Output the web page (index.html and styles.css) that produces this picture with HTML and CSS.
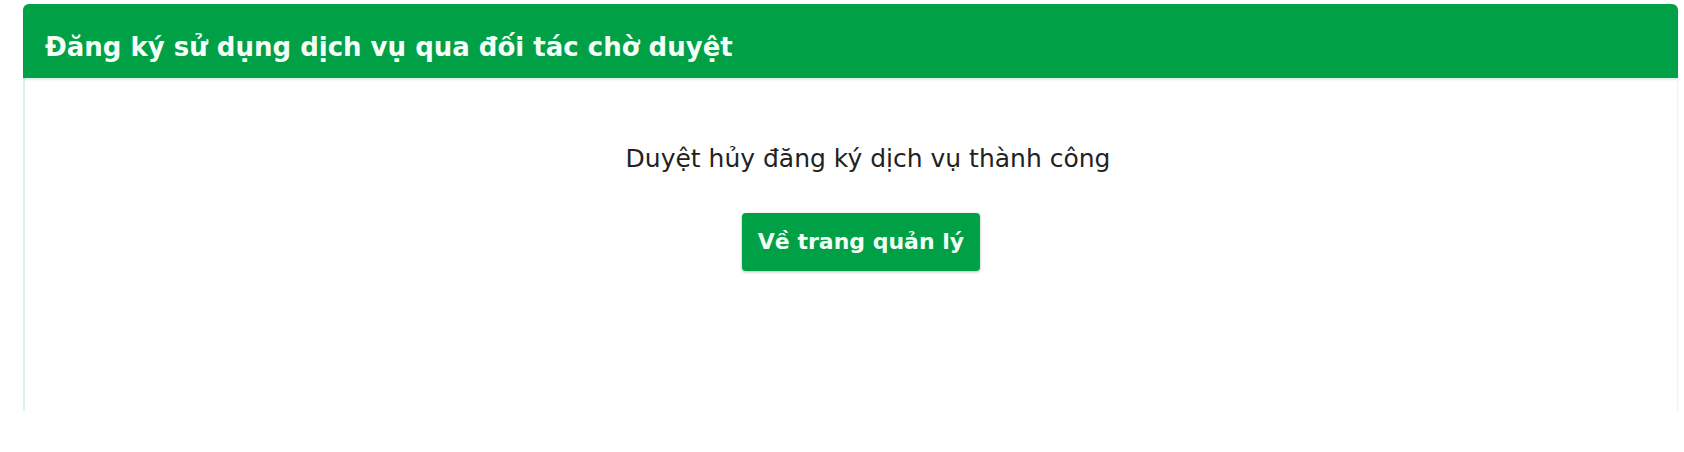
FILE: index.html
```html
<!DOCTYPE html>
<html lang="vi">
<head>
  <meta charset="UTF-8" />
  <meta name="viewport" content="width=device-width, initial-scale=1.0"/>
  <title>Đăng ký sử dụng dịch vụ qua đối tác chờ duyệt</title>
  <link rel="stylesheet" href="styles.css">
</head>
<body>
  <div class="panel">
    <div class="panel-head">
      <h2>Đăng ký sử dụng dịch vụ qua đối tác chờ duyệt</h2>
    </div>
    <div class="panel-body">
      <p class="message">Duyệt hủy đăng ký dịch vụ thành công</p>
      <a class="btn" href="#">Về trang quản lý</a>
    </div>
  </div>
</body>
</html>
```

FILE: styles.css
```css
body {
  margin: 0;
  padding: 4px 6px 0 23px;
  font-family: "DejaVu Sans", "Liberation Sans", sans-serif;
  background-color: #fff;
  color: #222;
}
.panel {
  height: 407px;
  border-left: 2px solid #dcefec;
  border-right: 1px solid #eef3f2;
  border-radius: 6px 6px 0 0;
  background: #fff;
  display: flex;
  flex-direction: column;
}
.panel-head {
  box-sizing: border-box;
  background-color: #00a046;
  height: 74px;
  margin-left: -2px;
  margin-right: -1px;
  border-radius: 6px 6px 0 0;
  border-bottom: 1px solid #1b8e5a;
  box-shadow: 0 2px 2px rgba(0, 160, 90, 0.15);
  padding: 28px 0 0 22px;
}
.panel-head h2 {
  margin: 0;
  color: #f4fff7;
  font-size: 26px;
  line-height: 30px;
  font-weight: bold;
}
.panel-body {
  display: flex;
  flex-direction: column;
  align-items: center;
  padding: 66px 0 0 20px;
}
.message {
  margin: 0 0 0 14px;
  font-size: 25px;
  line-height: 29px;
  color: #222;
}
.btn {
  margin-top: 40px;
  display: block;
  background-color: #00a046;
  color: #f2fff6;
  text-decoration: none;
  font-weight: bold;
  font-size: 22px;
  height: 58px;
  line-height: 58px;
  padding: 0 16px;
  border-radius: 4px;
  box-shadow: 0 1px 3px rgba(0, 80, 40, 0.35);
}
```
